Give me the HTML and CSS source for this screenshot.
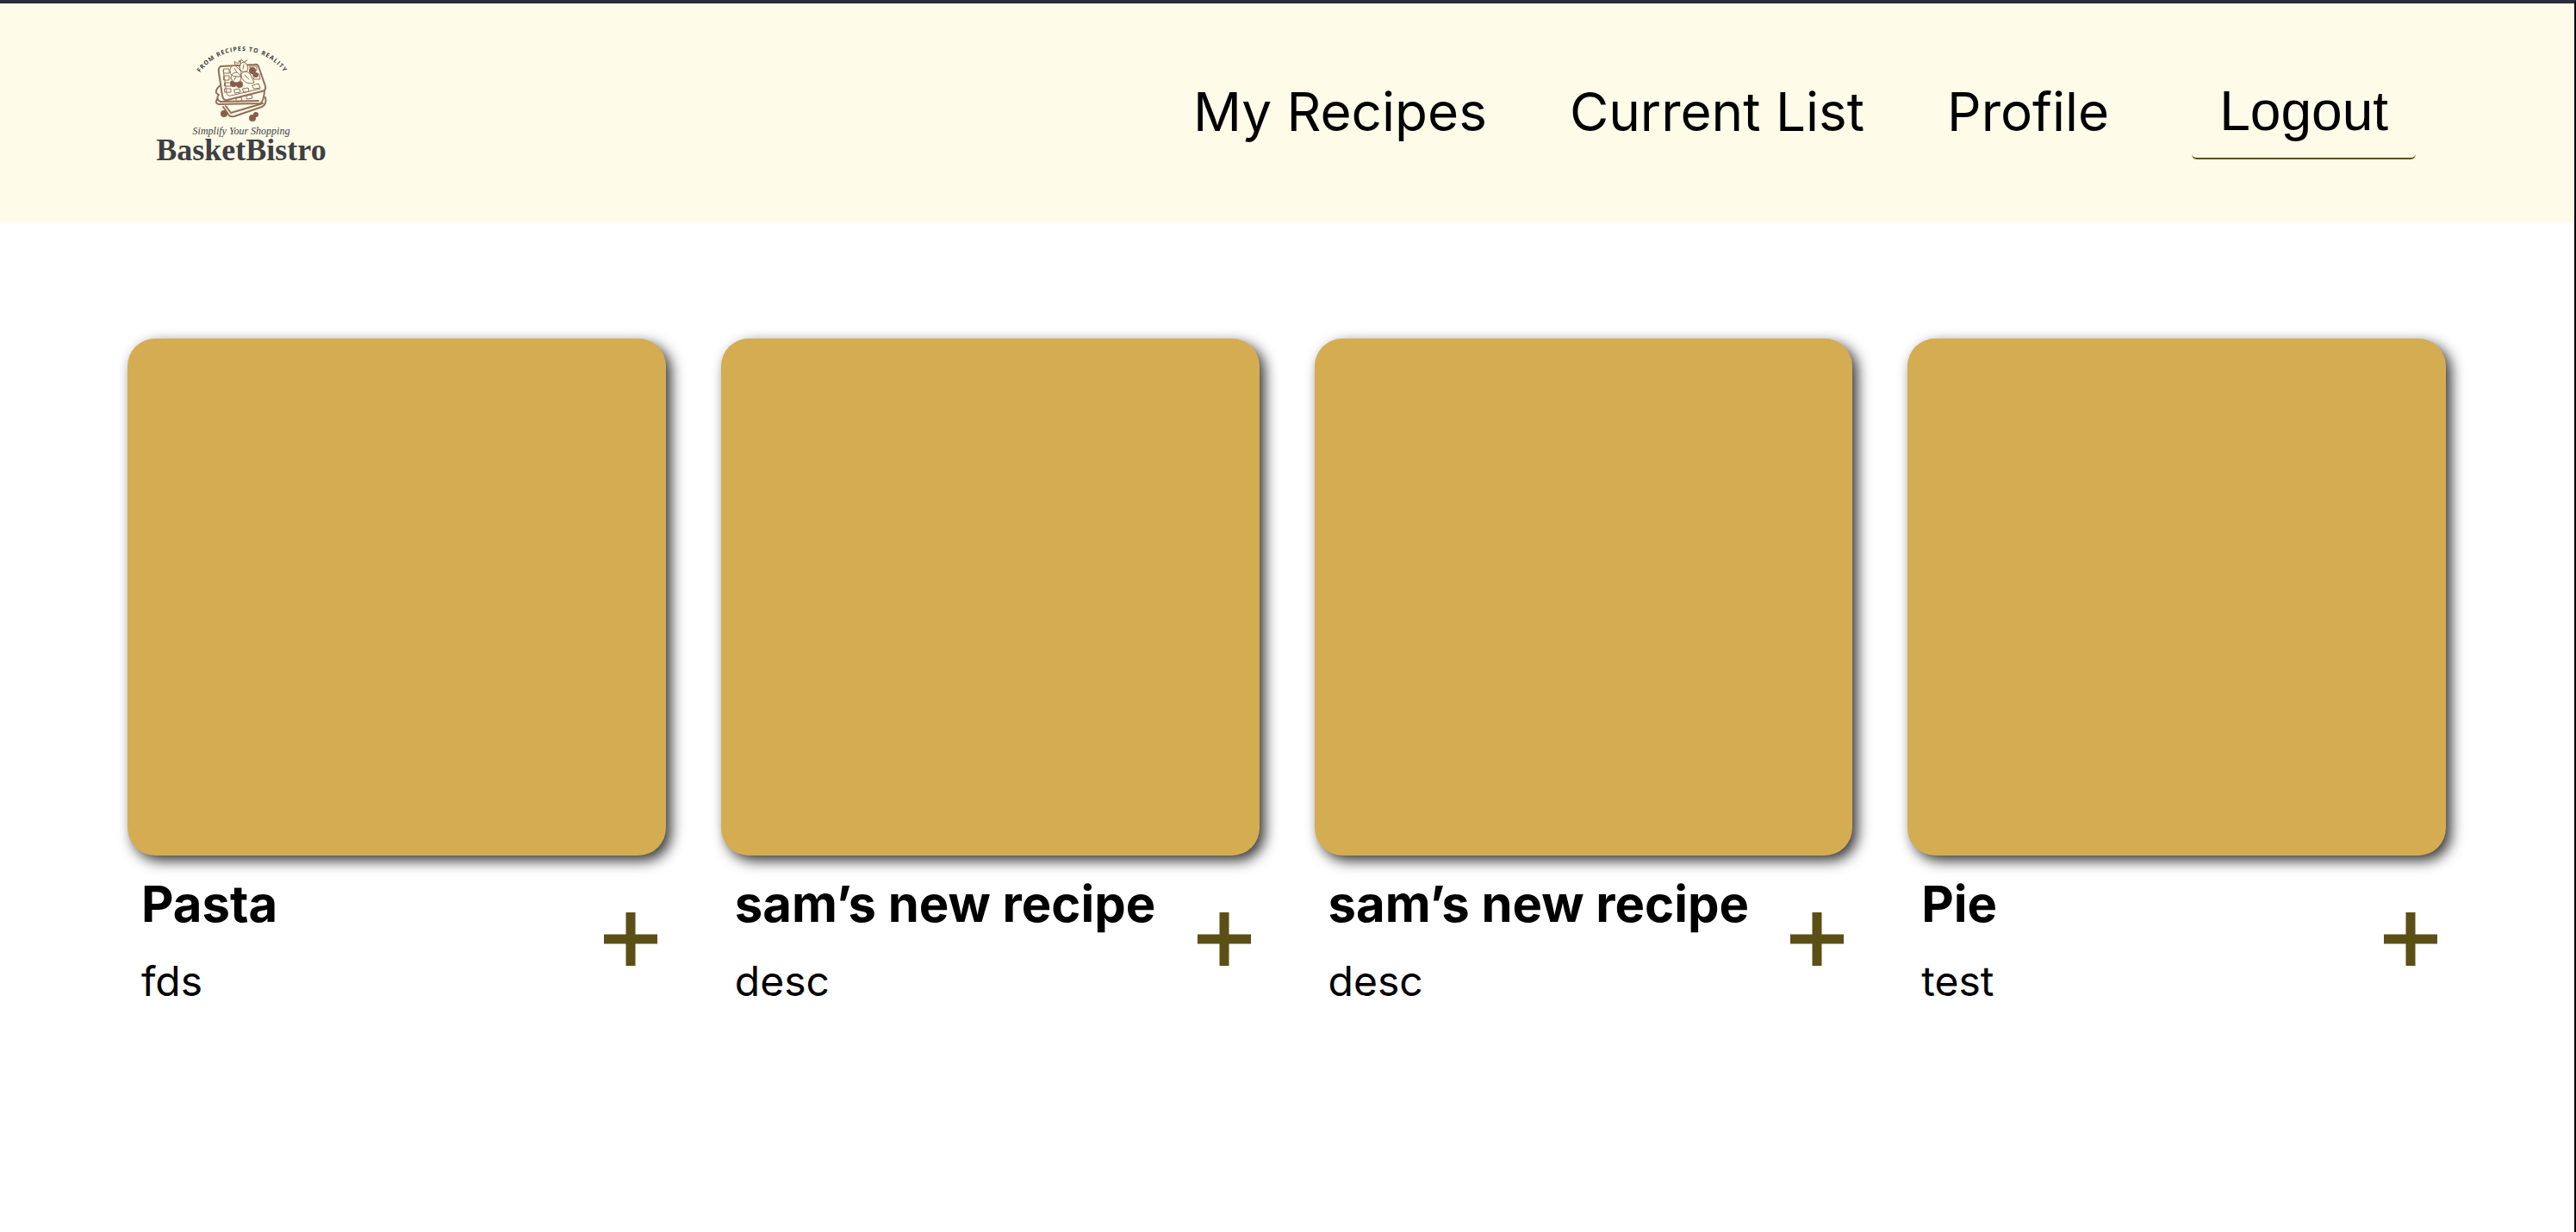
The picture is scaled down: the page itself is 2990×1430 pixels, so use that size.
FILE: index.html
```html
<!DOCTYPE html>
<html lang="en">
<head>
<meta charset="utf-8">
<meta name="viewport" content="width=device-width, initial-scale=1">
<title>BasketBistro</title>
<link rel="stylesheet" href="styles.css">
</head>
<body>
<header class="site-header">
  <a class="logo" href="#" aria-label="BasketBistro home">
    <svg class="logo-art" viewBox="160 30 240 180" aria-hidden="true">
      <defs>
        <path id="arc" d="M226 95A60 60 0 0 1 336 95"/>
      </defs>
      <text class="logo-arc"><textPath href="#arc" startOffset="50%" text-anchor="middle">FROM RECIPES TO REALITY</textPath></text>
      <g class="waffle">
        <path class="line-bold" d="M256 77Q253 79 254 84L258 111Q259 117 264 116L304 106Q309 105 308 100L300 77Q299 74 295 75Z"/>
        <path d="M259 81L263 108Q264 112 268 111L302 103"/>
        <path class="line-bold" d="M256 99Q250 103 251 108L254 110M252 115Q249 120 254 121L302 120Q306 118 307 106M253 111Q251 116 256 118L300 117"/>
        <path class="line-bold" d="M259 124L266 134Q268 136 272 135L304 124Q310 121 308 113M262 123L268 131L305 120"/>
        <path d="M260 80h6v5h-6zM260 88h6v5h-6zM261 96h7v4h-7zM261 103h7v4h-7zM272 104l6-1 1 4-6 1zM282 103l6-1 1 4-6 1zM293 99l7-2 2 5-7 1zM290 77h8v5h-6zM294 86h7l1 6h-7zM269 79h5M274 114l6-1 1 4-6 1zM286 111l6-1 1 4-6 1z"/>
      </g>
      <g class="berries">
        <circle cx="260" cy="132" r="4"/><circle cx="293" cy="137" r="4"/><circle cx="297" cy="133" r="3"/>
        <circle cx="271" cy="97" r="4"/><circle cx="278" cy="98" r="4"/><circle cx="293" cy="82" r="4"/><circle cx="297" cy="87" r="3"/>
      </g>
      <g class="waffle">
        <path class="fruit" d="M267 84Q266 76 273 76L280 83L279 89Q268 90 267 84ZM268 91Q268 84 275 84Q282 88 279 94Q272 99 268 91ZM278 78Q280 70 285 73Q290 79 286 83Q279 85 278 78ZM280 86Q286 79 291 87L295 96Q285 99 281 91Z"/>
        <path d="M273 75l-1-4 4 3 2-4 1 4M279 73l1-4 3 3 4-2M284 87l5 5M274 88l-2 5M283 75l-1 5M272 79l3 5"/>
      </g>
      <text class="logo-script" x="280" y="156">Simplify Your Shopping</text>
      <text class="logo-name" x="280" y="186">BasketBistro</text>
    </svg>
  </a>
  <nav class="site-nav">
    <a href="#">My Recipes</a>
    <a href="#">Current List</a>
    <a href="#">Profile</a>
    <button class="logout" type="button">Logout</button>
  </nav>
</header>
<main class="recipes">
  <article class="recipe">
    <div class="recipe-image"></div>
    <div class="recipe-info">
      <div class="recipe-text"><h2>Pasta</h2><p>fds</p></div>
      <button class="add" type="button" aria-label="Add Pasta"><svg viewBox="0 0 62 62"><path d="M0 31H62M31 0V62"/></svg></button>
    </div>
  </article>
  <article class="recipe">
    <div class="recipe-image"></div>
    <div class="recipe-info">
      <div class="recipe-text"><h2>sam’s new recipe</h2><p>desc</p></div>
      <button class="add" type="button" aria-label="Add sam’s new recipe"><svg viewBox="0 0 62 62"><path d="M0 31H62M31 0V62"/></svg></button>
    </div>
  </article>
  <article class="recipe">
    <div class="recipe-image"></div>
    <div class="recipe-info">
      <div class="recipe-text"><h2>sam’s new recipe</h2><p>desc</p></div>
      <button class="add" type="button" aria-label="Add sam’s new recipe"><svg viewBox="0 0 62 62"><path d="M0 31H62M31 0V62"/></svg></button>
    </div>
  </article>
  <article class="recipe">
    <div class="recipe-image"></div>
    <div class="recipe-info">
      <div class="recipe-text"><h2>Pie</h2><p>test</p></div>
      <button class="add" type="button" aria-label="Add Pie"><svg viewBox="0 0 62 62"><path d="M0 31H62M31 0V62"/></svg></button>
    </div>
  </article>
</main>
</body>
</html>
```
FILE: styles.css
```css
* {
  box-sizing: border-box;
}

body {
  margin: 0;
  min-height: 100vh;
  border-top: 4px solid #2b2c3b;
  border-right: 2px solid #05060d;
  background: #fff;
  color: #000;
  font-family: Inter, "Liberation Sans", sans-serif;
}

.site-header {
  display: flex;
  align-items: center;
  justify-content: space-between;
  padding: 26px 184px 48px 160px;
  background: #fefbe9;
}

.logo {
  flex: none;
}

.logo-art {
  display: block;
  width: 240px;
  height: 180px;
}

.logo-arc {
  fill: #3e4043;
  font: bold 7px "Open Sans", sans-serif;
  letter-spacing: 1px;
}

.logo-script {
  fill: #3e4043;
  font: italic 12px "Liberation Serif", serif;
  text-anchor: middle;
}

.logo-name {
  fill: #3e4043;
  font: bold 36px "Liberation Serif", serif;
  text-anchor: middle;
}

.waffle {
  fill: none;
  stroke: #916f5a;
  stroke-width: 1;
  stroke-linejoin: round;
  stroke-linecap: round;
}

.line-bold {
  stroke-width: 2;
}

.fruit {
  fill: #fefbe9;
}

.berries {
  fill: #865f4c;
}

.site-nav {
  display: flex;
  align-items: center;
  gap: 96px;
  margin-top: 20px;
  font-size: 62px;
  line-height: 80px;
}

.site-nav a {
  color: inherit;
  text-decoration: none;
}

.logout {
  padding: 14px 32px;
  border: 0;
  border-bottom: 2px solid #5c4f16;
  border-radius: 6px;
  background: none;
  color: inherit;
  font: 64px/80px "Liberation Sans", sans-serif;
}

.recipes {
  display: grid;
  grid-template-columns: repeat(4, 1fr);
  gap: 64px;
  padding: 135px 149px 135px 148px;
}

.recipe-image {
  height: 600px;
  border-radius: 32px;
  background: #d4ad52;
  box-shadow: 6px 6px 16px rgba(0, 0, 0, 0.8);
}

.recipe-info {
  display: flex;
  align-items: center;
  justify-content: space-between;
  padding: 16px 10px 0 16px;
}

.recipe h2 {
  margin: 0;
  font-size: 58px;
  line-height: 80px;
}

.recipe p {
  margin: 18px 0 0;
  font-size: 48px;
  line-height: 64px;
}

.add {
  flex: none;
  width: 62px;
  height: 62px;
  padding: 0;
  border: 0;
  background: none;
}

.add svg {
  display: block;
  width: 62px;
  height: 62px;
  stroke: #5c4f16;
  stroke-width: 11;
}
```
